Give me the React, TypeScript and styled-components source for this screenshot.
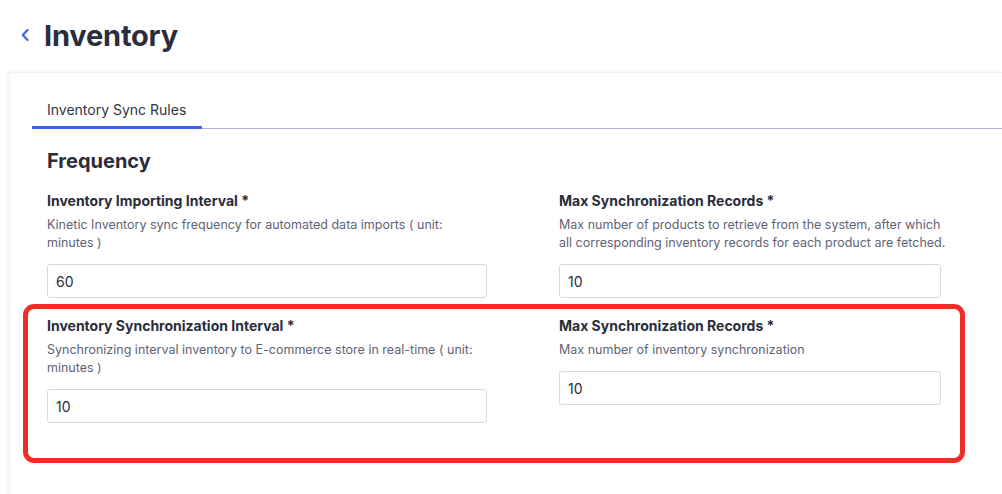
import React from "react";
import styled, { createGlobalStyle } from "styled-components";

const GlobalStyle = createGlobalStyle`
  html, body {
    margin: 0;
    padding: 0;
    background: #fff;
    font-family: "Inter", "Liberation Sans", Arial, sans-serif;
    color: #2a2d3a;
    overflow: hidden;
  }
`;

const Page = styled.div`
  width: 1002px;
  height: 494px;
  overflow: hidden;
`;

const Header = styled.div`
  display: flex;
  align-items: center;
  height: 72px;
  padding-left: 20px;
  gap: 14px;
  box-sizing: border-box;
  padding-bottom: 2px;
`;

const BackButton = styled.button`
  border: none;
  background: none;
  padding: 0;
  display: flex;
  align-items: center;
  color: #3d63f0;
  cursor: pointer;
`;

const Title = styled.h1`
  margin: 0;
  font-size: 29px;
  font-weight: 700;
  color: #2a2d3a;
  letter-spacing: -0.2px;
`;

const Card = styled.div`
  margin-left: 10px;
  background: #fff;
  box-shadow: -2px -1px 4px rgba(0, 0, 0, 0.06);
  border-top: 1px solid #f2f2f4;
  min-height: 430px;
  padding-left: 13px;
`;

const TabBar = styled.div`
  display: flex;
  margin-left: 9px;
  margin-top: 22px;
  border-bottom: 1px solid #b3b8d6;
`;

const Tab = styled.div<{ active?: boolean }>`
  padding: 6px 16px 8px 15px;
  font-size: 14px;
  color: #333644;
  margin-bottom: -1px;
  border-bottom: 3px solid ${(p) => (p.active ? "#3d63f0" : "transparent")};
`;

const Section = styled.div`
  padding-left: 24px;
`;

const SectionTitle = styled.h2`
  margin: 20px 0 18px;
  font-size: 20px;
  font-weight: 700;
  color: #2a2d3a;
`;

const Row = styled.div`
  display: grid;
  grid-template-columns: 512px 1fr;
`;

const Highlight = styled.div`
  margin-top: 6px;
  width: 942px;
  box-sizing: border-box;
  border: 5px solid #ee2d26;
  border-radius: 11px;
  padding: 7px 0 0 19px;
  height: 159px;
`;

const Field = styled.div<{ inputWidth: number; helpWidth: number }>`
  display: flex;
  flex-direction: column;
  input {
    width: ${(p) => p.inputWidth}px;
  }
  & > p {
    max-width: ${(p) => p.helpWidth}px;
  }
`;

const Label = styled.div`
  font-size: 14px;
  font-weight: 700;
  color: #2a2d3a;
  line-height: 20px;
  margin-bottom: 5px;
`;

const Help = styled.p`
  margin: 0 0 12px;
  font-size: 12.5px;
  color: #5f6375;
  line-height: 18px;
`;

const Input = styled.input`
  box-sizing: border-box;
  height: 34px;
  border: 1px solid #d6d8e6;
  border-radius: 3px;
  padding: 0 8px;
  font-family: inherit;
  font-size: 14px;
  color: #2a2d3a;
  outline: none;
`;

const Chevron = () => (
  <svg width="10" height="14" viewBox="0 0 10 14" fill="none">
    <path d="M7.5 2 L2.8 7 L7.5 12" stroke="currentColor" strokeWidth="2.2" strokeLinecap="round" strokeLinejoin="round" />
  </svg>
);

type FieldProps = { label: string; help: string; value: string; width: number; helpWidth: number };

const FormField = ({ label, help, value, width, helpWidth }: FieldProps) => (
  <Field inputWidth={width} helpWidth={helpWidth}>
    <Label>{label}</Label>
    <Help>{help}</Help>
    <Input defaultValue={value} />
  </Field>
);

export default function App() {
  return (
    <Page>
      <GlobalStyle />
      <Header>
        <BackButton aria-label="Back">
          <Chevron />
        </BackButton>
        <Title>Inventory</Title>
      </Header>
      <Card>
        <TabBar>
          <Tab active>Inventory Sync Rules</Tab>
        </TabBar>
        <Section>
          <SectionTitle>Frequency</SectionTitle>
          <Row>
            <FormField
              label="Inventory Importing Interval *"
              help="Kinetic Inventory sync frequency for automated data imports ( unit: minutes )"
              value="60"
              width={440}
              helpWidth={430}
            />
            <FormField
              label="Max Synchronization Records *"
              help="Max number of products to retrieve from the system, after which all corresponding inventory records for each product are fetched."
              value="10"
              width={382}
              helpWidth={392}
            />
          </Row>
        </Section>
        <Highlight>
          <Row>
            <FormField
              label="Inventory Synchronization Interval *"
              help="Synchronizing interval inventory to E-commerce store in real-time ( unit: minutes )"
              value="10"
              width={440}
              helpWidth={430}
            />
            <FormField
              label="Max Synchronization Records *"
              help="Max number of inventory synchronization"
              value="10"
              width={382}
              helpWidth={392}
            />
          </Row>
        </Highlight>
      </Card>
    </Page>
  );
}
